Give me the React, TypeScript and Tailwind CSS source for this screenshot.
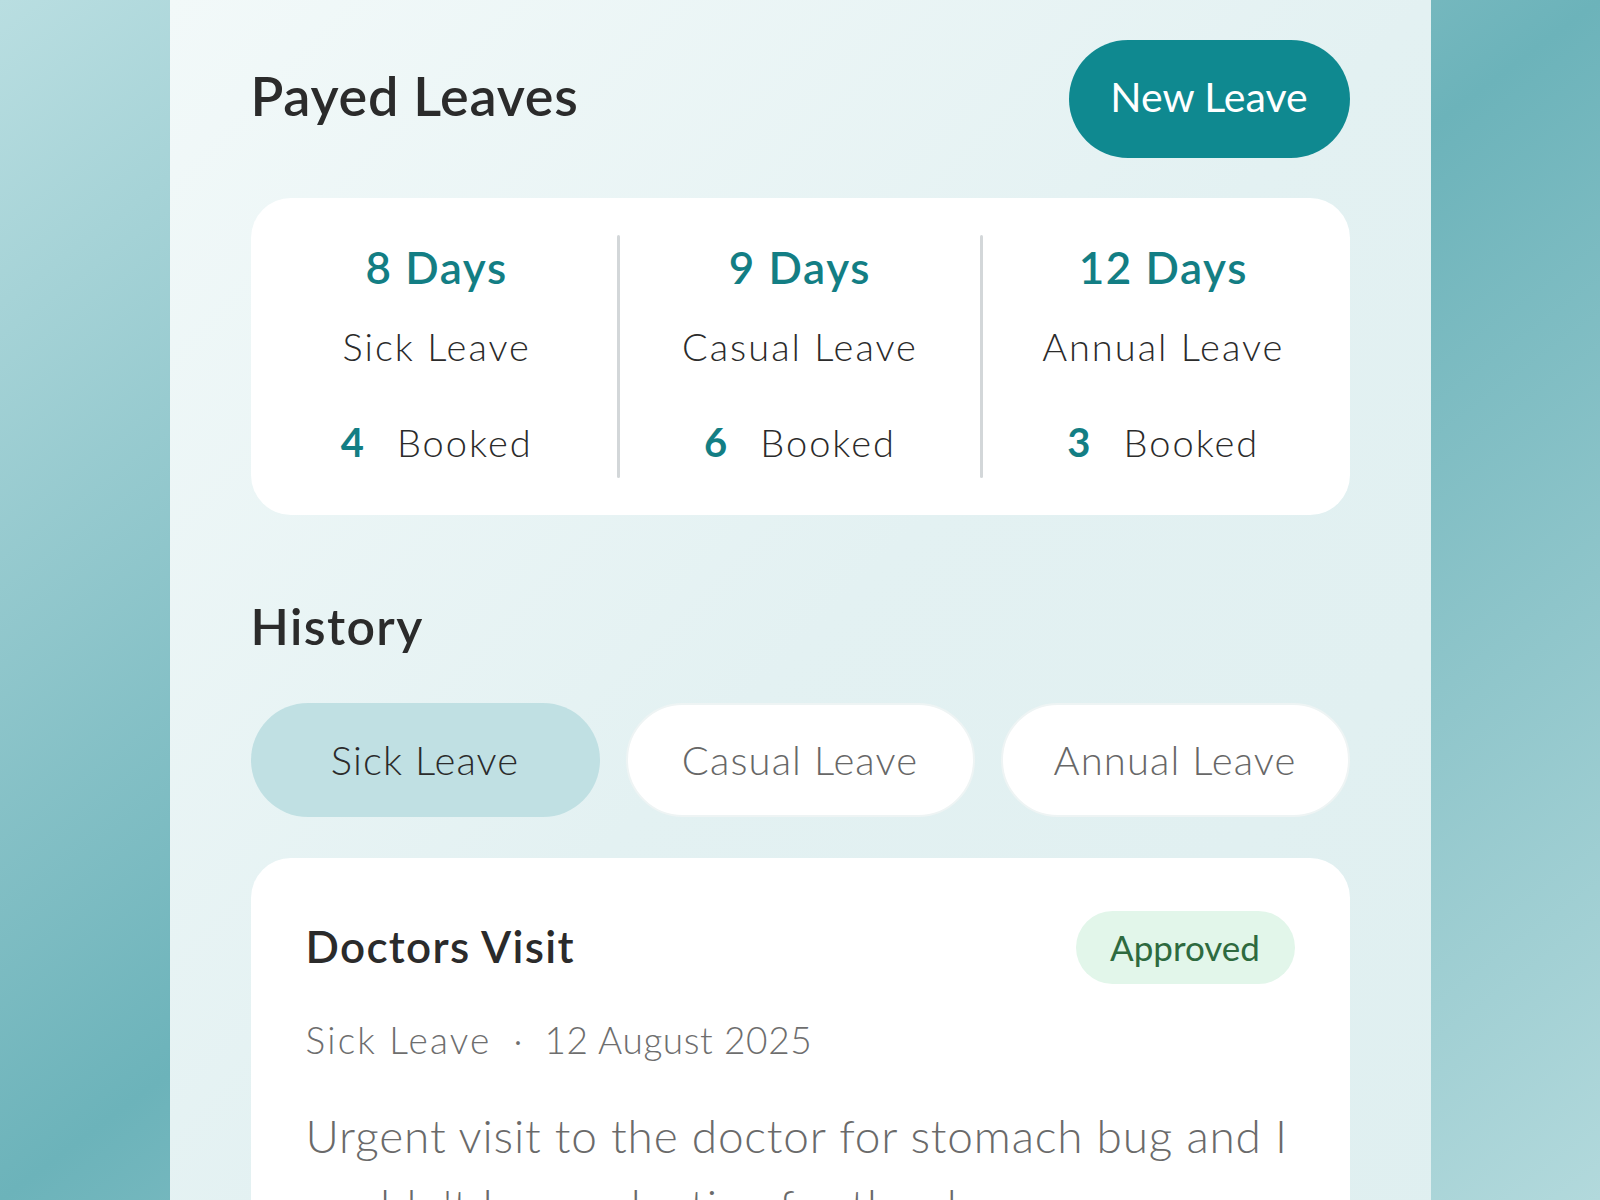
const font = "font-['Lato','Noto_Sans',sans-serif]";

interface StatProps {
  days: string;
  label: string;
  booked: string;
}

function Stat({ days, label, booked }: StatProps) {
  return (
    <div className="flex flex-1 flex-col items-center pt-[10px] pb-[16px]">
      <div className="text-[44px] leading-none font-semibold tracking-[1.6px] text-[#137e84]">{days}</div>
      <div className="mt-[38px] text-[38px] leading-none font-light tracking-[2px] text-[#2b2b2b]">{label}</div>
      <div className="mt-[57px] flex items-baseline gap-[33px] leading-none">
        <span className="text-[40px] font-bold text-[#137e84]">{booked}</span>
        <span className="text-[38px] font-light tracking-[2px] text-[#2b2b2b]">Booked</span>
      </div>
    </div>
  );
}

function Divider() {
  return <div className="w-[3px] self-stretch rounded-full bg-[#d3d7d9]" />;
}

const tabs = ["Sick Leave", "Casual Leave", "Annual Leave"];

export default function App() {
  return (
    <div
      className={`h-[1200px] overflow-hidden bg-linear-to-br from-[#b9dee1] via-[#6cb3ba] to-[#b2d9dc] ${font}`}
    >
      <div className="mx-auto min-h-full w-[1261px] bg-linear-to-br from-[#f2f9f9] via-[#e3f1f2] to-[#dfeff0] px-[81px] pt-[40px]">
        {/* header */}
        <div className="flex items-center justify-between">
          <h1 className="mb-[6px] text-[54px] leading-none font-semibold tracking-[0.7px] text-[#2b2b2b]">
            Payed Leaves
          </h1>
          <button className="flex h-[118px] w-[281px] items-center justify-center rounded-full bg-[#0f8990] pb-[6px] text-[41px] leading-none text-white">
            New Leave
          </button>
        </div>

        {/* balance */}
        <div className="mt-[40px] flex rounded-[40px] bg-white px-[6px] py-[37px]">
          <Stat days="8 Days" label="Sick Leave" booked="4" />
          <Divider />
          <Stat days="9 Days" label="Casual Leave" booked="6" />
          <Divider />
          <Stat days="12 Days" label="Annual Leave" booked="3" />
        </div>

        {/* history */}
        <h2 className="mt-[86px] text-[50px] leading-none font-semibold tracking-[1.4px] text-[#2b2b2b]">History</h2>

        <div className="mt-[52px] grid grid-cols-3 gap-[26px]">
          {tabs.map((t, i) => (
            <button
              key={t}
              className={
                i === 0
                  ? "flex h-[114px] items-center justify-center rounded-full bg-[#c0e0e3] text-[40px] leading-none font-light tracking-[1.1px] text-[#2b2b2b]"
                  : "flex h-[114px] items-center justify-center rounded-full border-2 border-[#eef4f4] bg-white text-[40px] leading-none font-light tracking-[1.1px] text-[#676767]"
              }
            >
              {t}
            </button>
          ))}
        </div>

        <div className="mt-[41px] rounded-[40px] bg-white px-[55px] pt-[53px] pb-[60px]">
          <div className="flex items-center justify-between">
            <h3 className="mb-[4px] text-[44px] leading-none font-semibold tracking-[1.3px] text-[#2b2b2b]">
              Doctors Visit
            </h3>
            <span className="flex h-[73px] w-[219px] items-center justify-center rounded-full bg-[#e2f6ea] text-[35px] leading-none text-[#2e6a3f]">
              Approved
            </span>
          </div>
          <div className="mt-[37px] flex items-center gap-[22px] text-[37px] leading-none font-light text-[#6e6e6e]">
            <span className="tracking-[2.2px]">Sick Leave</span>
            <span>·</span>
            <span className="tracking-[0.6px]">12 August 2025</span>
          </div>
          <p className="mt-[43px] text-[46px] leading-[70px] font-light tracking-[0.8px] text-[#6a6a6a]">
            Urgent visit to the doctor for stomach bug and I couldn't be productive for the day.
          </p>
        </div>
      </div>
    </div>
  );
}
